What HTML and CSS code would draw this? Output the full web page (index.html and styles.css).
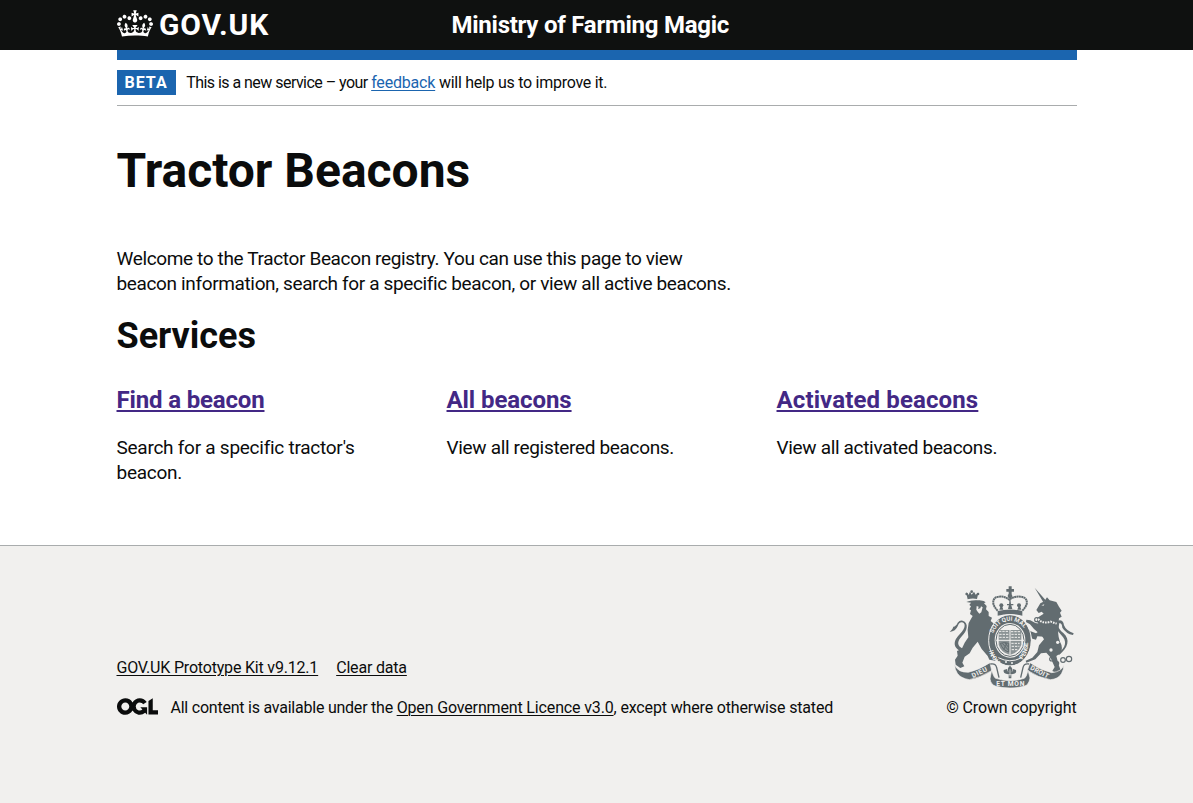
FILE: index.html
```html
<!DOCTYPE html>
<html lang="en">
<head>
<meta charset="utf-8">
<title>Tractor Beacons</title>
<link rel="stylesheet" href="styles.css">
</head>
<body>
<header class="header">
  <div class="container header-inner">
    <a class="logo" href="#">
      <svg class="crown" viewBox="0 0 132 97" width="36" height="27" aria-hidden="true"><path fill="currentColor" fill-rule="evenodd" d="M25 30.2c3.5 1.5 7.7-.2 9.1-3.7 1.5-3.6-.2-7.8-3.9-9.2-3.6-1.4-7.6.3-9.1 3.9-1.4 3.5.3 7.5 3.9 9zM9 39.5c3.6 1.5 7.8-.2 9.2-3.7 1.5-3.6-.2-7.8-3.9-9.1-3.6-1.5-7.6.2-9.1 3.8-1.4 3.5.3 7.5 3.8 9zM4.4 57.2c3.5 1.5 7.7-.2 9.1-3.8 1.5-3.6-.2-7.7-3.9-9.1-3.5-1.5-7.6.3-9.1 3.8-1.4 3.5.3 7.6 3.9 9.1zm38.3-21.4c3.5 1.5 7.7-.2 9.1-3.8 1.5-3.6-.2-7.7-3.9-9.1-3.6-1.5-7.6.3-9.1 3.8-1.3 3.6.4 7.7 3.9 9.1zm64.4-5.6c-3.6 1.5-7.8-.2-9.1-3.7-1.5-3.6.2-7.8 3.8-9.2 3.6-1.4 7.7.3 9.2 3.9 1.3 3.5-.4 7.5-3.9 9zm15.9 9.3c-3.6 1.5-7.7-.2-9.1-3.7-1.5-3.6.2-7.8 3.7-9.1 3.6-1.5 7.7.2 9.2 3.8 1.5 3.5-.3 7.5-3.8 9zm4.7 17.7c-3.6 1.5-7.8-.2-9.2-3.8-1.5-3.6.2-7.7 3.9-9.1 3.6-1.5 7.7.3 9.2 3.8 1.3 3.5-.4 7.6-3.9 9.1zM89.3 35.8c-3.6 1.5-7.8-.2-9.2-3.8-1.4-3.6.2-7.7 3.9-9.1 3.6-1.5 7.7.3 9.2 3.8 1.4 3.6-.3 7.7-3.9 9.1zM69.7 17.7l8.9 4.7V9.3l-8.9 2.8c-.2-.3-.5-.6-.9-.9L72.4 0H59.6l3.5 11.2c-.3.3-.6.5-.9.9l-8.8-2.8v13.1l8.8-4.7c.3.3.6.7.9.9l-5 15.4v.1c-.2.8-.4 1.6-.4 2.4 0 4.1 3.1 7.5 7 8.1h.2c.3 0 .7.1 1 .1.4 0 .7 0 1-.1h.2c4-.6 7.1-4.1 7.1-8.1 0-.8-.1-1.7-.4-2.4V34l-5.1-15.4c.4-.2.7-.6 1-.9zM66 92.8c16.9 0 32.8 1.1 47.1 3.2 4-16.9 8.9-26.7 14-33.5l-9.6-3.4c1 4.9 1.1 7.2 0 10.2-1.5-1.4-3-4.3-4.2-8.7L108.6 76c2.8-2 5-3.2 7.5-3.3-4.4 9.4-10 11.9-13.6 11.2-4.3-.8-6.3-4.6-5.6-7.9 1-4.7 5.7-5.9 8-.5 4.3-8.7-3-11.4-7.6-8.8 7.1-7.2 7.9-13.5 2.1-21.1-8 6.1-8.1 12.3-4.5 20.8-4.7-5.4-12.1-2.5-9.5 6.2 3.4-5.2 7.9-2 7.2 3.1-.6 4.3-6.4 7.8-13.5 7.2-10.3-.9-10.9-8-11.2-13.8 2.5-.5 7.1 1.8 11 7.3L80.2 60c-4.1 4.4-8 5.3-12.3 5.4 1.4-4.4 8-11.6 8-11.6H55.5s6.4 7.2 7.9 11.6c-4.2-.1-8-1-12.3-5.4l1.4 16.4c3.9-5.5 8.5-7.7 10.9-7.3-.3 5.8-.9 12.8-11.1 13.8-7.2.6-12.9-2.9-13.5-7.2-.7-5 3.8-8.3 7.1-3.1 2.7-8.7-4.6-11.6-9.4-6.2 3.7-8.5 3.6-14.7-4.6-20.8-5.8 7.6-5 13.9 2.2 21.1-4.7-2.6-11.9.1-7.7 8.8 2.3-5.5 7.1-4.2 8.1.5.7 3.3-1.3 7.1-5.7 7.9-3.5.7-9-1.8-13.5-11.2 2.5.1 4.7 1.3 7.5 3.3l-4.7-15.4c-1.2 4.4-2.7 7.2-4.3 8.7-1.1-3-.9-5.3 0-10.2l-9.5 3.4c5 6.9 9.9 16.7 14 33.5 14.8-2.1 30.8-3.2 47.7-3.2z"/></svg>
      <span class="logo-text">GOV.UK</span>
    </a>
    <a class="service-name" href="#">Ministry of Farming Magic</a>
  </div>
</header>
<div class="container">
  <div class="phase">
    <strong class="tag">BETA</strong>
    <p class="phase-text"><span class="phase-start">This is a new service – your </span><a class="phase-link" href="#">feedback</a><span class="phase-end"> will help us to improve it.</span></p>
  </div>
  <main class="main">
    <h1 class="title">Tractor Beacons</h1>
    <p class="intro">Welcome to the Tractor Beacon registry. You can use this page to view<br>beacon information, search for a specific beacon, or view all active beacons.</p>
    <h2 class="subtitle">Services</h2>
    <div class="services">
      <section class="service">
        <h3 class="service-title"><a class="find" href="#">Find a beacon</a></h3>
        <p class="service-text search">Search for a specific tractor's beacon.</p>
      </section>
      <section class="service">
        <h3 class="service-title"><a class="all" href="#">All beacons</a></h3>
        <p class="service-text">View all registered beacons.</p>
      </section>
      <section class="service">
        <h3 class="service-title"><a class="activated" href="#">Activated beacons</a></h3>
        <p class="service-text">View all activated beacons.</p>
      </section>
    </div>
  </main>
</div>
<footer class="footer">
  <div class="container footer-inner">
    <div class="meta">
      <div class="footer-links"><a href="#">GOV.UK Prototype Kit v9.12.1</a><a href="#">Clear data</a></div>
      <div class="licence">
        <svg class="ogl" viewBox="0 0 483.2 195.7" width="41" height="17" aria-hidden="true"><path fill="currentColor" d="M421.5 142.8V.1l-50.7 32.3v161.1h112.4v-50.7zm-122.3-9.6A47.12 47.12 0 0 1 221 97.8c0-26 21.1-47.1 47.1-47.1 16.7 0 31.4 8.7 39.7 21.8l42.7-27.2A97.63 97.63 0 0 0 268.1 0c-36.5 0-68.3 20.1-85.1 49.7A98 98 0 0 0 97.8 0C43.9 0 0 43.9 0 97.8s43.9 97.8 97.8 97.8c36.5 0 68.3-20.1 85.1-49.7a97.76 97.76 0 0 0 149.6 25.4l19.4 22.2h3v-87.8h-80l24.3 27.5zM97.8 145c-26 0-47.1-21.1-47.1-47.1s21.1-47.1 47.1-47.1 47.1 21.1 47.1 47.1S123.8 145 97.8 145"/></svg>
        <p class="licence-text"><span class="licence-start">All content is available under the </span><a href="#">Open Government Licence v3.0</a><span>, except where otherwise stated</span></p>
      </div>
    </div>
    <a class="copyright" href="#">
      <svg class="crest" viewBox="57 48 375 306" width="125" height="102" aria-hidden="true">
        <defs>
          <path id="motto-left" d="M212 274A53 62 0 0 1 189 203"/>
          <path id="motto-top" d="M190 190A53 56 0 0 1 290 190"/>
          <path id="motto-right" d="M277 269A58 64 0 0 0 290 200"/>
        </defs>
        <g class="ink">
          <!-- lion -->
          <path d="M108 67l8 7 4-9 5 9 7-9 5 9 8-6-4 19q-14-3-28 1z"/>
          <circle cx="125" cy="65" r="4"/><circle cx="110" cy="72" r="4"/><circle cx="144" cy="72" r="4"/>
          <path d="M109 96q22-10 52-3l6 4-5 3 8 8-2 10 8 8 0 12 10 5-4 10 10 8-2 12 6 12-4 20 6 22-8 10-12-5q7 13 12 23l7 8-1 9-18-3-5-11-18-21-12-22-15 18-9 17-15 10-7 18 6 11-12 5-14-10-2-15 8-12-2-14 14-6 9-19 11-16-2-22 3-21 12-21-8-6 3-11-5-3 5-9-5-4 5-7z"/>
          <path d="M97 246C66 234 70 212 89 193C110 172 106 157 95 157Q87 157 83 169Q77 184 59 186Q69 178 70 170Q78 169 83 158Q90 149 98 152C118 159 111 183 96 198C81 214 79 228 101 237z"/>
          <!-- unicorn -->
          <path d="M314 53l33 38-7 6z"/>
          <path d="M343 94l8-12 8 9 20 5 8 14 8 12-5 6 5 12-8 5-2 20-55 2q-12-12-8-24l19-12-6-6-9 4-7-9 12-20z"/>
          <path d="M328 165l60-5q-8 30 2 55 10 17 2 35l-13 8 7 27 6 15-13 9-12-6 7-12-13-29-12-14-16 2-17 18-27 10-2-6 20-9 15-17 5-20 15-18-12-20z"/>
          <path d="M338 163l-22-4-15-8-12-2-1 7 12 7 12 14 20 17zM332 180l-14 10-16-6-10-7-4 7 12 8 7 14 11 3 4-10 22 1z"/>
          <path d="M383 250C408 233 413 213 393 194C372 174 374 153 389 151Q400 151 402 166Q408 182 431 190L429 195Q408 191 397 173Q396 160 389 159C379 163 387 179 400 189C422 209 414 234 387 255z"/>
          <!-- royal crown -->
          <path d="M236 49h9v8h7v8h-7v8h-9v-8h-7v-8h7z"/>
          <circle cx="240" cy="78" r="7"/>
          <path d="M203 123q37-9 74 0v14q-37-10-74 0z"/>
          <path d="M208 119l6-17 6 17zM234 117l6-25 7 25zM262 119l6-17 6 17z"/>
          <circle cx="214" cy="106" r="6"/><circle cx="267" cy="106" r="6"/>
        </g>
        <g class="outline beads">
          <path d="M203 122C181 101 189 80 207 80Q224 78 238 89Q253 78 272 80C292 81 299 101 277 122"/>
        </g>
        <g class="outline">
          <path d="M240 85v30M231 104h19"/>
          <circle cx="320" cy="149" r="6"/><circle cx="365" cy="267" r="6"/><circle cx="380" cy="280" r="6"/><circle cx="399" cy="270" r="7"/><circle cx="417" cy="267" r="8"/>
        </g>
        <g class="paper">
          <path d="M140 108l6 2-2 7 7-2 2-6 5 3-4 15-6 4-5-6-4-6zM334 106l9-3-2 4z"/>
          <path d="M110 92q13-4 36-3" class="paper-line"/>
          <path d="M324 147q16 16 38 8l18 6" class="paper-line beaded"/>
          <circle cx="383" cy="217" r="5"/><circle cx="363" cy="240" r="5"/>
        </g>
        <!-- garter and shield -->
        <ellipse class="ink" cx="240" cy="211" rx="63" ry="76"/>
        <ellipse class="paper-line" cx="240" cy="211" rx="64" ry="77"/>
        <ellipse class="paper" cx="240" cy="211" rx="46" ry="52"/>
        <ellipse class="garter-line" cx="240" cy="211" rx="42" ry="48"/>
        <path class="shield-fill" d="M206 180h68v44q-8 25-34 31q-28-8-34-31z"/>
        <path class="paper-line" d="M240 166v90M199 211h83"/>
        <path class="paper-dash" d="M207 184h30m6 1h28M208 193h28m8 0h27M208 202h29m7 0h26M244 220h25M245 229h23M245 239h17"/>
        <path class="garter-line" d="M211 220q14-5 25 0v26q-18-5-25-26M217 220l18 20M225 219l10 12M231 219l-10 20"/>
        <text class="motto"><textPath href="#motto-left">HONI</textPath></text>
        <text class="motto"><textPath href="#motto-top">SOIT QUI MAL</textPath></text>
        <text class="motto"><textPath href="#motto-right">PENSE</textPath></text>
        <path class="paper-line" d="M205 263q35 18 68 1"/>
        <circle class="paper" cx="228" cy="276" r="3"/><circle class="paper" cx="246" cy="279" r="3"/>
        <!-- ribbon -->
        <path class="ribbon" d="M74 284q8 23 41 23 34-8 65-29l5 24q-34 21-67 27-26-4-36-19-8-11-8-26z"/>
        <path class="ribbon" d="M401 284q-4 21-36 24-34-8-65-30l-8 23q34 23 69 28 24-1 34-19 7-11 6-26z"/>
        <path class="curl" d="M181 282q16-3 19 11l7 30M297 282q-15-3-18 11l-7 30"/>
        <path class="ribbon" d="M185 300q6 22 12 25 43 14 86 0 7-4 11-25l6 24q-3 21-18 25-42 10-84 0-15-4-18-22z"/>
        <path class="ink" d="M240 287q12 10 4 20 5-2 5-10l9 3q3 11-9 12l-5 2v11h-8v-11l-5-2q-12-1-10-12l10-3q1 8 5 10-7-11 4-20z"/>
        <path class="paper-line thin" d="M240 298v22M230 314h20"/>
        <text class="ribbon-text" transform="translate(129 324) rotate(-26)" textLength="49">DIEU</text>
        <text class="ribbon-text" x="199" y="348" textLength="84">ET MON</text>
        <text class="ribbon-text" transform="translate(299 297) rotate(28)" textLength="60">DROIT</text>
      </svg>
      <span>© Crown copyright</span>
    </a>
  </div>
</footer>
</body>
</html>
```
FILE: styles.css
```css
* { box-sizing: border-box; }
body {
  margin: 0;
  background: #f1f0ee;
  color: #0b0c0c;
  font-family: Roboto, "Liberation Sans", sans-serif;
  font-size: 16px;
  line-height: 20px;
}
h1, h2, h3, p { margin: 0; }
a { color: inherit; text-underline-offset: 2px; text-decoration-thickness: 1px; }
svg { display: block; flex: none; }
body > .container { width: 100%; padding: 0 calc((100% - 960px) / 2); background: #fff; }
.container { width: 960px; margin: 0 auto; }

.header { height: 60px; background: linear-gradient(#0f1110 50px, #fff 50px); color: #fff; }
.header-inner { display: flex; height: 60px; border-bottom: 10px solid #1b65af; }
.header a { text-decoration: none; }
.logo { display: flex; width: 335px; height: 50px; padding-top: 10px; gap: 6.5px; }
.logo-text { font-size: 30px; line-height: 30px; font-weight: 700; letter-spacing: .9px; }
.crown { margin-top: 0; }
.service-name { padding-top: 10px; font-size: 24px; line-height: 30px; font-weight: 700; letter-spacing: -.25px; }

.phase { display: flex; align-items: center; height: 46px; border-bottom: 1px solid #a9acad; }
.tag { height: 25px; padding: 0 8px; background: #1b65af; color: #fff; font-size: 16px; line-height: 25px; letter-spacing: 1px; }
.phase-text { margin-left: 10.5px; white-space: nowrap; }
.phase-start { letter-spacing: -.54px; }
.phase-link { color: #1b65af; letter-spacing: -.19px; }
.phase-end { letter-spacing: -.27px; }

.main { padding: 40px 0 60px; }
.title { font-size: 48px; line-height: 50px; font-weight: 700; }
.intro { margin-top: 50px; font-size: 19px; line-height: 25px; letter-spacing: -.36px; white-space: nowrap; }
.subtitle { margin-top: 20px; font-size: 36px; line-height: 40px; font-weight: 700; }
.services { display: grid; grid-template-columns: repeat(3, 300px); gap: 30px; margin-top: 29px; }
.service-title { font-size: 24px; line-height: 30px; font-weight: 700; color: #432885; }
.service-title a { text-decoration-thickness: 2px; text-decoration-skip-ink: none; }
.find { letter-spacing: -.16px; }
.all { letter-spacing: -.08px; }
.activated { letter-spacing: .13px; }
.service-text { margin-top: 20px; width: 250px; font-size: 19px; line-height: 25px; letter-spacing: -.33px; }
.search { letter-spacing: -.26px; }

.footer { height: 258px; border-top: 1px solid #a9acad; background: #f1f0ee; }
.footer-inner { display: flex; justify-content: space-between; padding-top: 40px; }
.meta { padding-top: 72px; }
.footer-links { display: flex; gap: 18px; letter-spacing: -.19px; }
.licence { display: flex; margin-top: 20px; }
.licence-text { margin-left: 13px; letter-spacing: -.15px; white-space: nowrap; }
.licence-start { letter-spacing: -.23px; }
.copyright { display: flex; flex-direction: column; align-items: flex-end; gap: 10px; letter-spacing: -.13px; text-decoration: none; white-space: nowrap; }
.crest { margin-right: 3px; }

.ink { fill: #626c70; }
.paper { fill: #f1f0ee; }
.outline, .garter-line { fill: none; stroke: #626c70; stroke-width: 3; }
.outline { stroke-width: 3.5; }
.beads { stroke-width: 6; stroke-dasharray: 6 1; }
.paper-line { fill: none; stroke: #f1f0ee; stroke-width: 3; }
.beaded { stroke-width: 6; stroke-dasharray: 5 3; }
.thin { stroke-width: 2; }
.shield-fill { fill: #8b9395; }
.paper-dash { fill: none; stroke: #f1f0ee; stroke-width: 3; stroke-dasharray: 7 3; }
.ribbon { fill: #626c70; stroke: #f1f0ee; stroke-width: 2; }
.curl { fill: none; stroke: #626c70; stroke-width: 4; }
.motto, .ribbon-text { fill: #f1f0ee; font-family: Roboto, sans-serif; font-weight: 700; letter-spacing: 0; }
.motto { font-size: 18px; }
.ribbon-text { font-size: 20px; }
```
